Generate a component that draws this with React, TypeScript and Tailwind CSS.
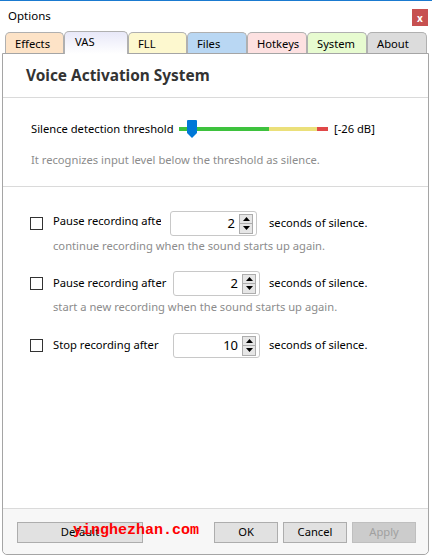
import React from "react";

const tabs = [
  { label: "Effects", w: "w-[59px]", bg: "bg-[#fde3c7]" },
  { label: "VAS", w: "w-[64px]", bg: "", active: true },
  { label: "FLL", w: "w-[59px]", bg: "bg-[#fdf8cf]" },
  { label: "Files", w: "w-[60px]", bg: "bg-[#b9d7f3]" },
  { label: "Hotkeys", w: "w-[60px]", bg: "bg-[#fde1e1]" },
  { label: "System", w: "w-[60px]", bg: "bg-[#e7fbd0]" },
  { label: "About", w: "w-[60px]", bg: "bg-[#dcdcdc]" },
];

const Checkbox = () => (
  <div className="w-[13px] h-[13px] border border-[#333333] bg-white shrink-0" />
);

const SpinBox = ({ value }: { value: string }) => (
  <div className="w-[87px] h-[25px] border border-[#c8c8c8] rounded-[3px] bg-white flex items-center justify-end pr-[3px] shrink-0">
    <span className="text-[13px] text-black mr-[4px] leading-none">{value}</span>
    <div className="flex flex-col w-[14px] h-[20px] border border-[#adadad] bg-[#e6e6e6]">
      <div className="flex-1 flex items-center justify-center border-b border-[#adadad]">
        <svg width="7" height="4" viewBox="0 0 7 4">
          <path d="M0 4 L3.5 0 L7 4 Z" fill="#000" />
        </svg>
      </div>
      <div className="flex-1 flex items-center justify-center">
        <svg width="7" height="4" viewBox="0 0 7 4">
          <path d="M0 0 L3.5 4 L7 0 Z" fill="#000" />
        </svg>
      </div>
    </div>
  </div>
);

const Button = ({ label, disabled }: { label: string; disabled?: boolean }) => (
  <div
    className={
      disabled
        ? "w-[64px] h-[21px] border border-[#bfbfbf] bg-[#cccccc] text-[#a0a0a0] flex items-center justify-center"
        : "w-[64px] h-[21px] border border-[#adadad] bg-[#e1e1e1] text-black flex items-center justify-center"
    }
  >
    {label}
  </div>
);

export default function App() {
  return (
    <div className="relative w-[432px] h-[556px] bg-white border-t border-[#1a7ad0] overflow-hidden font-['Noto_Sans','Open_Sans',sans-serif] text-[11.2px] text-black whitespace-nowrap">
      {/* title bar */}
      <div className="h-[30px] flex items-center justify-between pl-[8px] pr-[4px]">
        <span className="text-[11.5px]">Options</span>
        <div className="w-[16px] h-[17px] bg-[#c75050] text-white text-[10px] font-bold flex items-center justify-center leading-none mt-[3px]">
          x
        </div>
      </div>

      {/* tabs */}
      <div className="h-[22px] flex items-end pl-[5px]">
        {tabs.map((t) =>
          t.active ? (
            <div
              key={t.label}
              className={`${t.w} h-[23px] -mb-px relative z-10 border border-b-0 border-[#b0b0b0] rounded-t-[5px] bg-linear-to-b from-[#e8e8f8] to-white pl-[10px] pt-[2px] leading-[16px]`}
            >
              {t.label}
            </div>
          ) : (
            <div
              key={t.label}
              className={`${t.w} ${t.bg} h-[21px] border border-b-0 border-[#b0b0b0] rounded-t-[5px] pl-[9px] pt-[3px] leading-[16px]`}
            >
              {t.label}
            </div>
          )
        )}
      </div>

      {/* panel */}
      <div className="ml-[2px] w-[427px] h-[502px] border border-[#a5a5a5] rounded-b-[5px] flex flex-col bg-white">
        <div className="h-[44px] flex items-center pl-[23px] border-b border-[#dadada]">
          <span className="text-[15.4px] font-bold text-[#333333]">Voice Activation System</span>
        </div>

        <div className="h-[89px] border-b border-[#dadada] pl-[28px] pt-[21px]">
          <div className="h-[20px] flex items-center">
            <span className="w-[148px] shrink-0">Silence detection threshold</span>
            <div className="relative w-[149px] h-[20px] flex items-center">
              <div className="w-full h-[4px] flex">
                <div className="w-[90px] bg-[#3ec23e]" />
                <div className="w-[48px] bg-[#ebe07a]" />
                <div className="w-[11px] bg-[#e04848]" />
              </div>
              <svg className="absolute left-[8px] top-[1px]" width="10" height="18" viewBox="0 0 10 18">
                <path d="M0 1 Q0 0 1 0 L9 0 Q10 0 10 1 L10 13 L5 18 L0 13 Z" fill="#0078d7" />
              </svg>
            </div>
            <span className="ml-[6px]">[-26 dB]</span>
          </div>
          <div className="mt-[13px] leading-[16px] text-[#8c8c8c]">
            It recognizes input level below the threshold as silence.
          </div>
        </div>

        <div className="flex-1 pt-[24px] pl-[27px]">
          <div className="h-[25px] flex items-center">
            <Checkbox />
            <div className="ml-[10px] mr-[9px] w-[108px] shrink-0 h-[13px] overflow-hidden self-start mt-[2px] leading-[16px]">
              Pause recording after
            </div>
            <SpinBox value="2" />
            <span className="ml-[12px]">seconds of silence.</span>
          </div>
          <div className="mt-[2px] pl-[23px] leading-[16px] text-[#8c8c8c]">
            continue recording when the sound starts up again.
          </div>

          <div className="mt-[17px] h-[25px] flex items-center">
            <Checkbox />
            <span className="ml-[10px] w-[120px] shrink-0">Pause recording after</span>
            <SpinBox value="2" />
            <span className="ml-[9px]">seconds of silence.</span>
          </div>
          <div className="mt-[3px] pl-[23px] leading-[16px] text-[#8c8c8c]">
            start a new recording when the sound starts up again.
          </div>

          <div className="mt-[18px] h-[25px] flex items-center">
            <Checkbox />
            <span className="ml-[10px] w-[120px] shrink-0">Stop recording after</span>
            <SpinBox value="10" />
            <span className="ml-[9px]">seconds of silence.</span>
          </div>
        </div>

        <div className="h-[46px] border-t border-[#dadada] bg-[#f7f7f7] rounded-b-[5px] flex items-start pt-[13px] pl-[14px] pr-[12px]">
          <div className="w-[126px] h-[21px] border border-[#adadad] bg-[#e1e1e1] flex items-center justify-center">
            Default
          </div>
          <div className="flex-1" />
          <div className="flex gap-[5px]">
            <Button label="OK" />
            <Button label="Cancel" />
            <Button label="Apply" disabled />
          </div>
        </div>
      </div>

      {/* watermark */}
      <div className="absolute left-[73px] top-[521px] text-[15px] font-bold text-[#ff0000] font-['Liberation_Mono',monospace] leading-[18px]">
        yinghezhan.com
      </div>
    </div>
  );
}
